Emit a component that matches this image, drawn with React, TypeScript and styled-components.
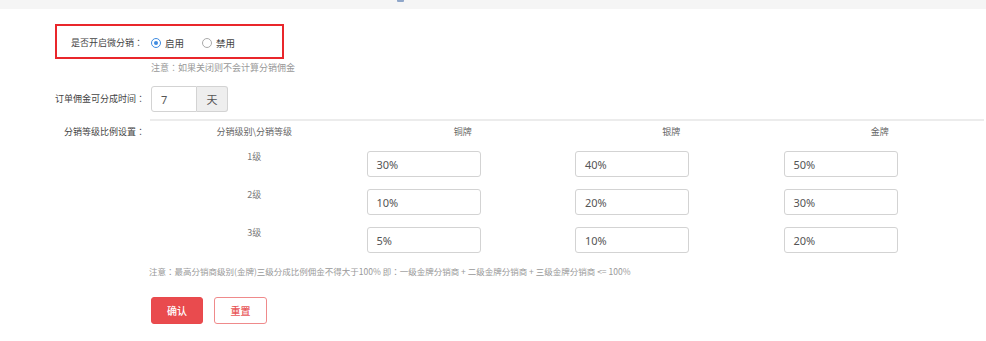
import React from "react";
import styled, { createGlobalStyle } from "styled-components";

const Global = createGlobalStyle`
  html, body { margin: 0; padding: 0; background: #fff; }
  body { font-family: "Noto Sans", "Noto Sans CJK SC", sans-serif; color: #444; }
  * { box-sizing: border-box; }
`;

const Page = styled.div`
  width: 986px;
  height: 341px;
  overflow: hidden;
  background: #fff;
`;

const TopStrip = styled.div`
  height: 9px;
  background: #f5f5f5;
  display: flex;
  padding-left: 397px;
`;

const StripIcon = styled.div`
  width: 7px;
  height: 2px;
  background: #8fa6c9;
  border-radius: 0 0 1px 1px;
`;

const Form = styled.div`
  display: flex;
  flex-direction: column;
  padding-top: 15px;
`;

const Highlight = styled.div`
  margin-left: 55px;
  width: 229px;
  height: 35px;
  border: 2px solid #e9262b;
  display: flex;
  align-items: center;
  padding-top: 3px;
`;

const Row = styled.div<{ $mt?: number; $align?: string }>`
  display: flex;
  align-items: ${(p) => p.$align || "center"};
  margin-top: ${(p) => p.$mt || 0}px;
`;

const Label = styled.div<{ $w?: number; $pt?: number }>`
  width: ${(p) => p.$w || 145}px;
  padding-top: ${(p) => p.$pt || 0}px;
  flex: none;
  text-align: right;
  font-family: "Noto Sans CJK SC", sans-serif;
  font-size: 9px;
  line-height: 12px;
  color: #444;
  white-space: nowrap;
`;

const Colon = styled.span`
  font-family: "Noto Sans CJK TC", sans-serif;
`;

const Content = styled.div`
  margin-left: 6px;
  display: flex;
  align-items: center;
`;

const RadioGroup = styled.div`
  display: flex;
  align-items: center;
  gap: 18px;
  margin-left: 8px;
`;

const RadioOption = styled.label`
  display: flex;
  align-items: center;
  gap: 4px;
  font-family: "Noto Sans CJK SC", sans-serif;
  font-size: 9.5px;
  line-height: 12px;
  color: #444;
`;

const RadioCircle = styled.span<{ $checked?: boolean }>`
  width: 10px;
  height: 10px;
  border-radius: 50%;
  border: 1px solid ${(p) => (p.$checked ? "#3f8be0" : "#aaa")};
  background: #fff;
  display: flex;
  align-items: center;
  justify-content: center;
  &::after {
    content: "";
    width: 4px;
    height: 4px;
    border-radius: 50%;
    background: ${(p) => (p.$checked ? "#3f8be0" : "transparent")};
  }
`;

const Note = styled.div<{ $mt?: number; $ml?: number; $fs?: number }>`
  margin-top: ${(p) => p.$mt || 0}px;
  margin-left: ${(p) => p.$ml ?? 151}px;
  font-family: "Noto Sans CJK SC", sans-serif;
  font-size: ${(p) => p.$fs || 9}px;
  line-height: 12px;
  color: #999;
  white-space: nowrap;
`;

const InputGroup = styled.div`
  display: flex;
  height: 26px;
`;

const TextInput = styled.div<{ $w: number; $joined?: boolean }>`
  width: ${(p) => p.$w}px;
  height: 26px;
  border: 1px solid #d3d3d3;
  border-radius: ${(p) => (p.$joined ? "3px 0 0 3px" : "3px")};
  background: #fff;
  display: flex;
  align-items: center;
  padding-left: 9px;
  font-family: "Noto Sans", "Noto Sans CJK SC", sans-serif;
  font-size: 11px;
  color: #555;
`;

const Addon = styled.div`
  width: 31px;
  height: 26px;
  border: 1px solid #d3d3d3;
  border-left: none;
  border-radius: 0 3px 3px 0;
  background: #eee;
  display: flex;
  align-items: center;
  justify-content: center;
  font-family: "Noto Sans CJK SC", sans-serif;
  font-size: 11px;
  color: #555;
`;

const Table = styled.div`
  margin-left: 5px;
  width: 834px;
  border-top: 2px solid #ececec;
  display: grid;
  grid-template-columns: repeat(4, 1fr);
`;

const HeadCell = styled.div`
  height: 24px;
  padding-top: 5px;
  text-align: center;
  font-family: "Noto Sans CJK SC", sans-serif;
  font-size: 9px;
  line-height: 12px;
  color: #666;
  white-space: nowrap;
`;

const LevelCell = styled.div`
  height: 38px;
  padding-top: 6px;
  text-align: center;
  font-family: "Noto Sans CJK SC", sans-serif;
  font-size: 9px;
  line-height: 12px;
  color: #777;
`;

const InputCell = styled.div`
  height: 38px;
  padding: 6px 0 0 8px;
`;

const Buttons = styled.div`
  display: flex;
  gap: 11px;
  margin-left: 151px;
  margin-top: 20px;
`;

const Button = styled.button<{ $primary?: boolean }>`
  width: ${(p) => (p.$primary ? 52 : 53)}px;
  height: 27px;
  border-radius: 3px;
  border: 1px solid ${(p) => (p.$primary ? "#e9494c" : "#ef8a8b")};
  background: ${(p) => (p.$primary ? "#e94b4e" : "#fff")};
  color: ${(p) => (p.$primary ? "#fff" : "#e8585a")};
  font-family: "Noto Sans CJK SC", sans-serif;
  font-size: 10px;
  font-weight: 500;
  padding: 0;
  display: flex;
  align-items: center;
  justify-content: center;
`;

const levels = [
  { name: "1级", values: ["30%", "40%", "50%"] },
  { name: "2级", values: ["10%", "20%", "30%"] },
  { name: "3级", values: ["5%", "10%", "20%"] },
];

export default function App() {
  return (
    <Page>
      <Global />
      <TopStrip>
        <StripIcon />
      </TopStrip>
      <Form>
        <Highlight>
          <Label $w={86}>
            是否开启微分销<Colon>：</Colon>
          </Label>
          <RadioGroup>
            <RadioOption>
              <RadioCircle $checked />
              启用
            </RadioOption>
            <RadioOption>
              <RadioCircle />
              禁用
            </RadioOption>
          </RadioGroup>
        </Highlight>
        <Note $mt={3}>
          注意<Colon>：</Colon>如果关闭则不会计算分销佣金
        </Note>
        <Row $mt={12}>
          <Label>
            订单佣金可分成时间<Colon>：</Colon>
          </Label>
          <Content>
            <InputGroup>
              <TextInput $w={46} $joined>
                7
              </TextInput>
              <Addon>天</Addon>
            </InputGroup>
          </Content>
        </Row>
        <Row $mt={7} $align="flex-start">
          <Label $pt={7}>
            分销等级比例设置<Colon>：</Colon>
          </Label>
          <Table>
            <HeadCell>分销级别\分销等级</HeadCell>
            <HeadCell>铜牌</HeadCell>
            <HeadCell>银牌</HeadCell>
            <HeadCell>金牌</HeadCell>
            {levels.map((lv) => (
              <React.Fragment key={lv.name}>
                <LevelCell>{lv.name}</LevelCell>
                {lv.values.map((v, i) => (
                  <InputCell key={i}>
                    <TextInput $w={114}>{v}</TextInput>
                  </InputCell>
                ))}
              </React.Fragment>
            ))}
          </Table>
        </Row>
        <Note $mt={6} $ml={149} $fs={8.5}>
          注意<Colon>：</Colon>最高分销商级别(金牌)三级分成比例佣金不得大于100% 即<Colon>：</Colon>一级金牌分销商 + 二级金牌分销商 + 三级金牌分销商 &lt;= 100%
        </Note>
        <Buttons>
          <Button $primary>确认</Button>
          <Button>重置</Button>
        </Buttons>
      </Form>
    </Page>
  );
}
